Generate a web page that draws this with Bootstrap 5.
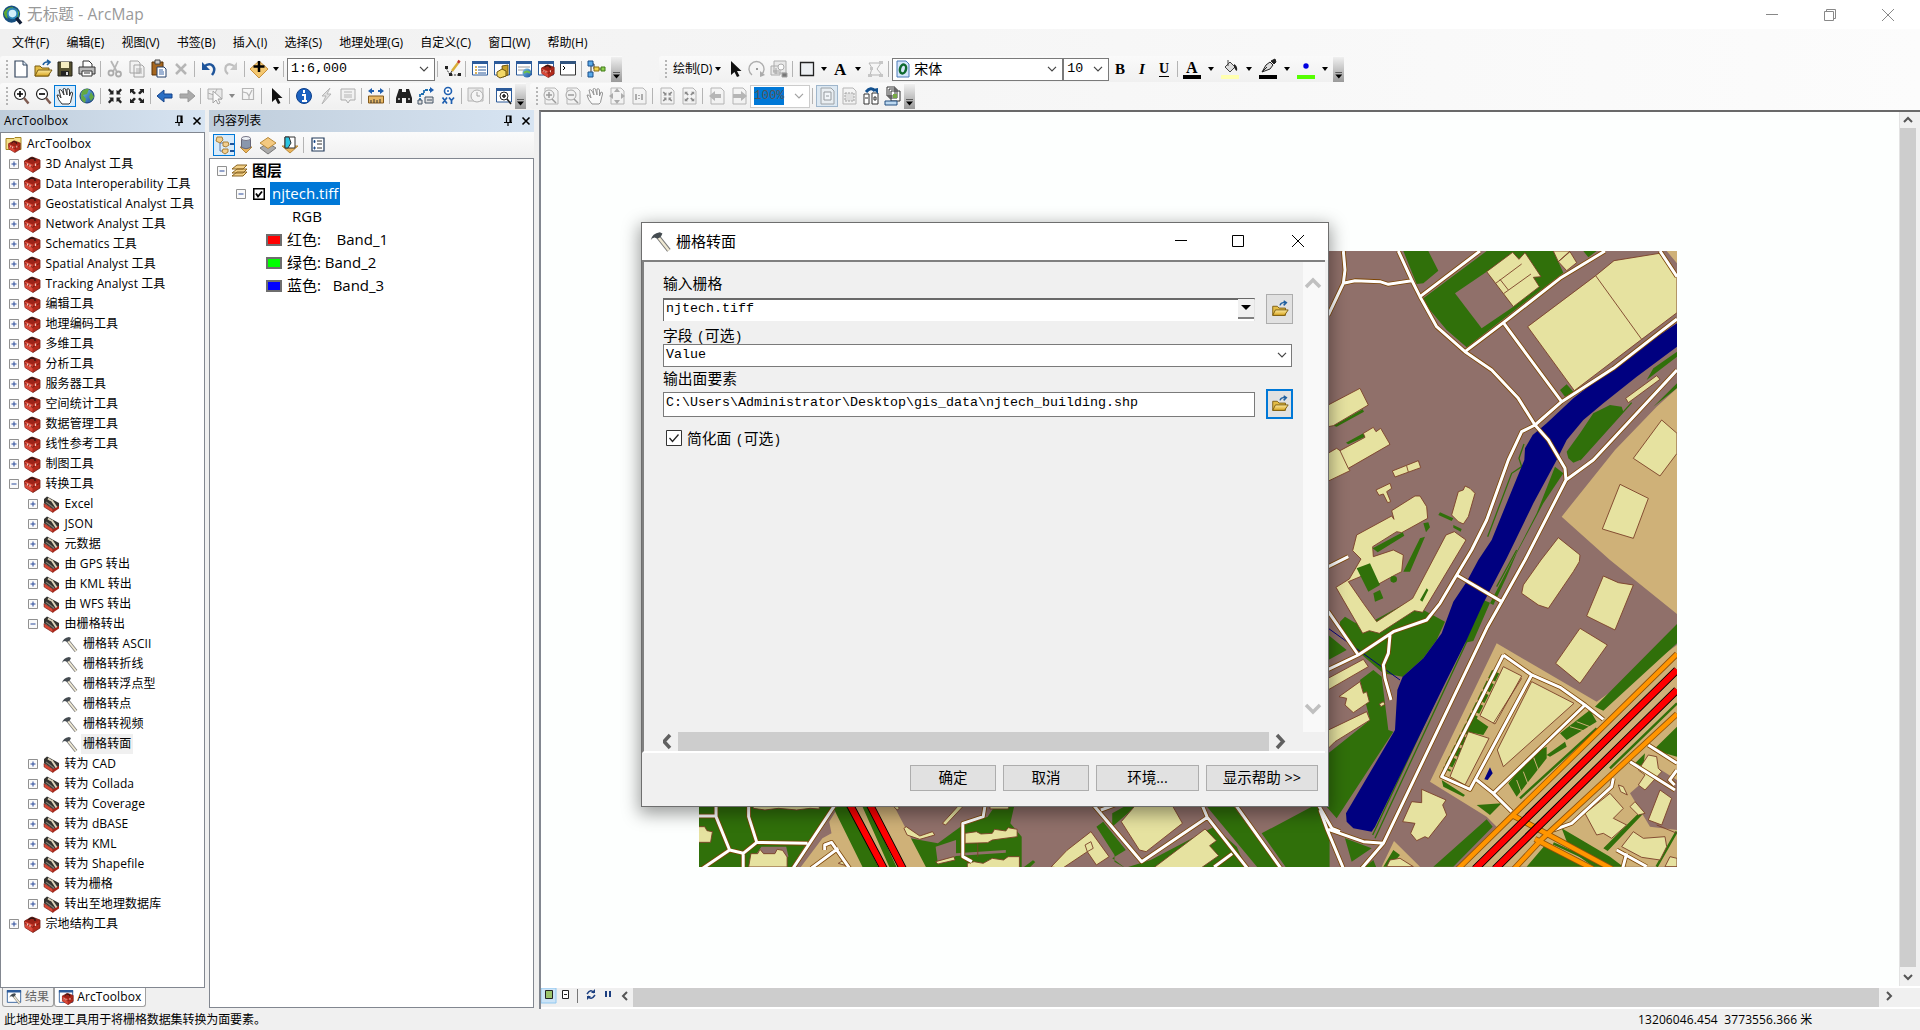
<!DOCTYPE html>
<html lang="zh-CN">
<head>
<meta charset="utf-8">
<title>无标题 - ArcMap</title>
<link href="https://cdn.jsdelivr.net/npm/bootstrap@5.3.0/dist/css/bootstrap.min.css" rel="stylesheet">
<style>
html,body{height:100%;overflow:hidden}
body{font:12px/1 "Open Sans","Noto Sans CJK SC",sans-serif;color:#000;background:#f0f0f0;letter-spacing:-.1px}
svg{display:block;flex:none}
.titlebar{height:29px;color:#999;font-size:15.5px;letter-spacing:.15px;padding-left:2px}
.titlebar .wbtns{gap:38px;padding-right:22px}
.topband{height:81px;background:linear-gradient(90deg,#f0f0f0,#fcfcfc)}
.menus{height:27px;padding-left:12px;gap:17.2px;letter-spacing:0}
.tb{height:26px}
.tb.second{padding-top:2px}
.strip{height:26px;background:linear-gradient(#fafafa,#f0f0f0);padding-left:4px;border-radius:3px 0 0 3px}
.strip.draw{margin-left:37px}
.grip{width:6px;height:18px;background:repeating-linear-gradient(#b5b5b5 0 2px,transparent 2px 4px);background-size:2px 100%;background-repeat:no-repeat;background-position:2px 0;flex:none}
.ti{width:22px;height:22px;flex:none}
.on{outline:1px solid #0078d7;outline-offset:-1px;background:#d8ebfa}
.on2{outline:1px solid #9fb6cc;outline-offset:-1px;background:#dce8f2}
.dis{filter:grayscale(1);opacity:.5}
.sp{width:6px;height:16px;flex:none;background:linear-gradient(#b4b4b4,#b4b4b4) 2px 0/1px 100% no-repeat}
.ct{width:11px;flex:none;display:flex;justify-content:center}
.ct::after{content:"";border:3px solid transparent;border-top:4px solid #000;border-bottom:0}
.strip.draw .ct{width:12px}
.strip.draw .ct.wide{width:16px}
.ct.gr::after{border-top-color:#888}
.cap{width:11px;height:25px;background:linear-gradient(#f0f0f0,#999);flex:none;display:flex;align-items:end;justify-content:center;padding-bottom:3px}
.cap::after{content:"";width:7px;height:7px;background:#000;clip-path:polygon(0 0,100% 0,100% 15%,0 15%,0 42%,100% 42%,50% 100%,0 42%)}
.cbx{height:23px;background:#fff;border:1px solid #7a7a7a;font-size:14px;padding:0 5px 0 3px;flex:none}
.mono{font-family:"Liberation Mono","Noto Sans CJK SC",monospace;letter-spacing:0}
.w-scale{width:148px;font-size:13.3px}.w-font{width:171px}.w-size{width:46px;font-size:13.3px}.w-zoom{width:60px;border-color:#ccc;font-size:13.3px}
.w-zoom span{background:#0078d7;color:#555;padding:3px 0;font-size:12.5px}
.ahead{height:22px;background:linear-gradient(90deg,#bfcddb,#d7e4f2);padding:0 3px 0 4px;letter-spacing:.1px}
.col-tb{width:205px}.col-toc{width:325px}
.box{background:#fff;border:1px solid #828790}
.tree{padding-top:1px;letter-spacing:.1px}
.tree>div{height:20px;display:flex;align-items:center;gap:5px;padding-left:7.5px;white-space:nowrap}
.tree .l0{padding-left:4px}.tree .l2{padding-left:26.5px}.tree .l3{padding-left:60px}
.tree .cur span{background:#f0f0f0;margin-left:-2px;padding:4px 2px}
.tree svg.e{width:10px;height:10px}
.tree svg.i{width:17px;height:17px}
.tabs{height:21px;padding-left:2px}
.tabx{height:19px;border:1px solid #a0a0a0;border-top:0;border-radius:0 0 3px 3px;padding:0 4px 0 3px;gap:3px;display:flex;align-items:center;color:#666;letter-spacing:.1px}
.tabx.act{background:#fff;color:#000}
.toc{font-size:15px;letter-spacing:0}
.toc>div{height:23px;display:flex;align-items:center;white-space:pre}
.toc .t0{padding-left:7px}.toc .t1{padding-left:26px}.toc .t2{padding-left:82px}.toc .t3{padding-left:56px}
.toc .sel{background:#0078d7;color:#fff;padding:4px 2px;margin-left:5px}
.chk{margin-left:7px}
.sw{width:16px;height:12px;border:2px solid #6e6e6e;margin-right:5px}
.sw-r{background:#f00}.sw-g{background:#0f0}.sw-b{background:#00f}
.toctb{height:26px;padding-left:4px;background:linear-gradient(#fbfbfb,#f0f0f0)}
.mapwin{border-top:2px solid #696969;border-left:2px solid #828790;margin-left:5px}
.canvas{background:#fdfffe;position:relative;overflow:hidden}
.plan{position:absolute;left:158px;top:139px}
.plan path{vector-effect:non-scaling-stroke}
.vs{width:21px;background:#f0f0f0;border-left:1px solid #e3e3e3}
.hs{height:21px;background:#f0f0f0;border-top:2px solid #fff}
.thumb{background:#cdcdcd}
.status{height:21px}
.coord{width:282px;letter-spacing:.1px}
.dlg{position:absolute;left:641px;top:222px;width:688px;height:585px;background:#f0f0f0;border:1px solid #6e6e6e;box-shadow:0 5px 16px 2px rgba(0,0,0,.38)}
.dlgt{height:37px;background:#fff;padding:0 22px 0 7px;font-size:15px;letter-spacing:0}
.frame{height:493px;border-top:2px solid #808080;border-left:2px solid #808080;border-bottom:2px solid #fff;margin-right:3px}
.form{width:660px;padding:12px 0 0 19px;font-size:14.8px;letter-spacing:0}
.form .lb{height:18px;line-height:18px;white-space:pre}
.form .lb i{font-style:normal;margin:0 2px}
.form .mono{font-size:13.33px}
.lb2{margin-top:0}.lb3{margin-top:2px}
.lb.lb4{margin-top:8px;padding-left:3px;gap:5px}
.brow{height:34px;width:630px}
.fi{background:#fff;border:1px solid #7a7a7a;display:flex;align-items:center;padding:0 4px 2px 2px;flex:none}
.fi.one{width:592px;height:23px;border-width:2px 1px 0 1px;border-color:#696969 #e3e3e3 #fff #696969;padding-right:0}
.fi.two{width:629px;height:23px}.fi.three{width:592px;height:25px}
.dd{width:16px;height:20px;background:#f0f0f0;border-bottom:2px solid #808080;align-self:end}
.bb{width:27px;height:30px;background:#e1e1e1;border:1px solid #adadad;display:flex;align-items:center;justify-content:center}
.bb.foc{border:2px solid #0078d7}
.hscr{margin-top:285px}
.dbtns{gap:7px;padding:12px 10px 0 0}
.dbtn{height:26px;background:#e1e1e1;border:1px solid #adadad;border-radius:0;padding:0;font-size:14.5px;line-height:1;color:#000;letter-spacing:0}
.b1{width:86px}.b2{width:103px}.b3{width:112px}
</style>
<script src="https://cdn.jsdelivr.net/npm/bootstrap@5.3.0/dist/js/bootstrap.bundle.min.js"></script>
</head>
<body class="d-flex flex-column">
<svg width="0" height="0" class="position-absolute">
<defs>
<linearGradient id="gl" x1="0" y1="0" x2="1" y2="1"><stop offset="0" stop-color="#7cc4e8"/><stop offset="1" stop-color="#1a4fa0"/></linearGradient>
<linearGradient id="gy" x1="0" y1="0" x2="0" y2="1"><stop offset="0" stop-color="#fdeaa0"/><stop offset="1" stop-color="#d8a520"/></linearGradient>
<symbol id="app" viewBox="0 0 22 22"><circle cx="10" cy="10" r="9" fill="#174f80"/><path d="M2 8Q6 2 12 3L9 8 5 9 6 15Q2 13 2 8ZM14 4l4 4-1 6-3-4z" fill="#5da832"/><circle cx="11" cy="9.500" r="5" fill="#d3effa" stroke="#2c86b8" stroke-width="2"/><path d="M15 14l5 6" stroke="#111f38" stroke-width="3.500"/></symbol>
<symbol id="new" viewBox="0 0 22 22"><path d="M5 3h8l4 4v12H5z" fill="#fff" stroke="#35475e" stroke-width="1.200"/><path d="M13 3v4h4" fill="#dce8f5" stroke="#35475e"/></symbol>
<symbol id="open" viewBox="0 0 22 22"><path d="M3 18V8h5l2 2h7v8z" fill="#e3bc46" stroke="#7a5c10"/><path d="M3 18l3-6h14l-4 6z" fill="url(#gy)" stroke="#7a5c10"/><path d="M11 7q1-3 4-3h2M15 2l3 2-3 3" fill="none" stroke="#1e5fa0" stroke-width="1.600"/></symbol>
<symbol id="save" viewBox="0 0 22 22"><path d="M4 4h14v14H4z" fill="#55502f" stroke="#25231a"/><path d="M7 4h8v6H7z" fill="#f4ecc0"/><path d="M7 13h8v5H7z" fill="#222"/><path d="M12 14h2v3h-2z" fill="#ddd"/></symbol>
<symbol id="print" viewBox="0 0 22 22"><path d="M7 9V3h6l3 3v3" fill="#fff" stroke="#333"/><path d="M3 9h16v7H3z" fill="#bbb" stroke="#333"/><path d="M6 13h10v5H6z" fill="#fff" stroke="#333"/><path d="M8 15h6" stroke="#333"/></symbol>
<symbol id="cut" viewBox="0 0 22 22"><path d="M7 3l6 11M14 3L9 14" stroke="#777" stroke-width="1.800"/><g fill="none" stroke="#666" stroke-width="1.800"><circle cx="7" cy="15" r="2.500"/><circle cx="14.500" cy="16" r="2.500"/></g></symbol>
<symbol id="copy" viewBox="0 0 22 22"><path d="M4 3h8l2 2v10H4zM8 7h8l2 2v10H8z" fill="#eee" stroke="#555"/><path d="M10 11h6M10 13h6M10 15h6" stroke="#666"/></symbol>
<symbol id="paste" viewBox="0 0 22 22"><path d="M4 4h11v13H4z" fill="#a5661f" stroke="#5a3208"/><path d="M7 2h5v4H7z" fill="#ccc" stroke="#444"/><path d="M9 9h7l2 2v8H9z" fill="#fff" stroke="#25406a"/><path d="M11 12h4M11 14h5M11 16h5" stroke="#3a66a8"/></symbol>
<symbol id="del" viewBox="0 0 22 22"><path d="M6 6l10 10M16 6L6 16" stroke="#777" stroke-width="2.500"/></symbol>
<symbol id="undo" viewBox="0 0 22 22"><path d="M6 9q5-5 9-1 3 4-1 9" fill="none" stroke="#1f559b" stroke-width="2.500"/><path d="M4 4v8h8z" fill="#1f559b"/></symbol>
<symbol id="redo" viewBox="0 0 22 22"><path d="M15 9q-5-5-9-1-2 5 2 8" fill="none" stroke="#888" stroke-width="2.200"/><path d="M17 4v8h-7z" fill="#999"/></symbol>
<symbol id="add" viewBox="0 0 22 22"><path d="M11 3l9 8-9 9-9-9z" fill="#f4c76f" stroke="#c8913e"/><path d="M11 3v11M5.500 8.500h11" stroke="#000" stroke-width="2.500"/></symbol>
<symbol id="edit" viewBox="0 0 22 22"><path d="M5 10l4 7h10" fill="none" stroke="#333" stroke-dasharray="2 1"/><path d="M4 8h3v3H4zM8 15h3v3H8zM17 15h3v3h-3z" fill="#222"/><path d="M17 5l-6 8" stroke="#d8ad36" stroke-width="2.500"/><path d="M18.500 2.500l-1.500 2.500" stroke="#c0392b" stroke-width="2.500"/><path d="M11 13l-2 3" stroke="#333"/></symbol>
<symbol id="win" viewBox="0 0 22 22"><path d="M3.500 4h15v13h-15z" fill="#fff" stroke="#2c5b9a"/><path d="M3 3h16v3H3z" fill="#2c5b9a"/></symbol>
<symbol id="wlist" viewBox="0 0 22 22"><use href="#win"/><path d="M6 9h2M6 12h2M6 15h2" stroke="#d09a20" stroke-width="1.500"/><path d="M9 9h8M9 12h8M9 15h8" stroke="#2c5b9a"/></symbol>
<symbol id="wcat" viewBox="0 0 22 22"><use href="#win"/><path d="M11 8l6-1v10l-5 2z" fill="#c9a227" stroke="#6f5610"/><path d="M6 14l5-3 4 2v5l-6 2-3-2z" fill="#f3d867" stroke="#6f5610"/></symbol>
<symbol id="wsea" viewBox="0 0 22 22"><use href="#win"/><path d="M5 9h12M5 12h7" stroke="#999"/><circle cx="14" cy="15" r="4.500" fill="url(#gl)"/><path d="M11 15q3-3 6 0" stroke="#6fc048" stroke-width="2" fill="none"/></symbol>
<symbol id="wtbx" viewBox="0 0 22 22"><use href="#win"/><svg x="6" y="6" width="14" height="14"><use href="#tbx"/></svg></symbol>
<symbol id="wpy" viewBox="0 0 22 22"><path d="M3.500 4h15v13h-15z" fill="#fff" stroke="#333"/><path d="M3 3h16v3H3z" fill="#33557f"/><path d="M6 8l2 2-2 2" fill="none" stroke="#000"/></symbol>
<symbol id="model" viewBox="0 0 22 22"><path d="M6 6v10M7 6h2v5h7" fill="none" stroke="#333"/><path d="M3 3h5v5H3zM3 14h5v5H3z" fill="#59a9e8" stroke="#1a4f8a"/><path d="M9 9h5v4H9z" fill="#f1d44f" stroke="#8a6d10"/><path d="M16 9h4v4h-4z" fill="#8ed052" stroke="#3e7a15"/></symbol>
<symbol id="zin" viewBox="0 0 22 22"><circle cx="10" cy="9" r="5.500" fill="#fff" stroke="#222" stroke-width="1.200"/><path d="M14 13l4.500 5.500" stroke="#7d5a50" stroke-width="2.500"/><path d="M10 6v6M7 9h6" stroke="#000" stroke-width="1.600"/></symbol>
<symbol id="zout" viewBox="0 0 22 22"><circle cx="10" cy="9" r="5.500" fill="#fff" stroke="#222" stroke-width="1.200"/><path d="M14 13l4.500 5.500" stroke="#7d5a50" stroke-width="2.500"/><path d="M7 9h6" stroke="#000" stroke-width="1.600"/></symbol>
<symbol id="pan" viewBox="0 0 22 22"><path d="M8 19q-4-4-5-9 2-1 4 3L5 5q2-1 3 1l2 4-1-6q2-1 2.500 0l1.500 6V4q2-1 2.500 1v6l1.500-4q2 0 1.500 2l-1.500 6q0 3-2 4z" fill="#fff" stroke="#333"/></symbol>
<symbol id="globe" viewBox="0 0 22 22"><circle cx="11" cy="11" r="7" fill="url(#gl)" stroke="#143a78"/><path d="M6 6q4-3 7-2l-2 5-4 1 3 4-1 4Q3 15 6 6zM15 7l3 5-3 4-2-4z" fill="#63a842"/></symbol>
<symbol id="fin" viewBox="0 0 22 22"><g fill="#222"><path d="M4 5l1.500-1.500L8 6l1.500-1v4.500H5L6.500 8zM18 5l-1.500-1.500L14 6l-1.500-1v4.500H17L15.500 8zM4 17l1.500 1.500L8 16l1.500 1v-4.500H5L6.500 14zM18 17l-1.500 1.500L14 16l-1.500 1v-4.500H17L15.500 14z"/></g></symbol>
<symbol id="fout" viewBox="0 0 22 22"><g fill="#222"><path d="M4 4h4.500L7.500 5.500 10 8 8 9.500 5.500 7 4 8.500zM18 4h-4.500l1 1.500L12 8l2 1.500L16.500 7 18 8.500zM4 18h4.500l-1-1.500L10 14l-2-1.500L5.500 15 4 13.500zM18 18h-4.500l1-1.500L12 14l2-1.500 2.500 2.500 1.500-1.500z"/></g></symbol>
<symbol id="back" viewBox="0 0 22 22"><path d="M3 11l7-6v4h8v4h-8v4z" fill="#2b6fc4" stroke="#15438a"/></symbol>
<symbol id="fwd" viewBox="0 0 22 22"><path d="M19 11l-7-6v4H4v4h8v4z" fill="#aaa" stroke="#999"/></symbol>
<symbol id="self" viewBox="0 0 22 22"><path d="M4 4h14v10H4zM4 8l6 2 3-6M10 10l2 4" fill="#ddd" stroke="#666"/><path d="M9 6v12l3-3 2 4 2-1-2-4h4z" fill="#fff" stroke="#555"/></symbol>
<symbol id="clr" viewBox="0 0 22 22"><path d="M5.500 3.500h11v11h-11zM6 7l4 1 2 3 3-6M12 11v3" fill="none" stroke="#777" stroke-width="1.200"/></symbol>
<symbol id="ptr" viewBox="0 0 22 22"><path d="M7 3v14l3.500-3 2.500 5 2.500-1-2.500-5h4.500z" fill="#111"/></symbol>
<symbol id="info" viewBox="0 0 22 22"><circle cx="11" cy="11" r="7.500" fill="#1c62c0" stroke="#0d3f8a"/><path d="M11 5v3M9 10h3v6M9 16h5" stroke="#fff" stroke-width="2" fill="none"/></symbol>
<symbol id="bolt" viewBox="0 0 22 22"><path d="M15 3l-8 8h4l-4 8 9-10h-4z" fill="#ccc" stroke="#777"/></symbol>
<symbol id="pop" viewBox="0 0 22 22"><path d="M4 4h14v11h-5l-2 3-2-3H4z" fill="#eee" stroke="#666"/><path d="M7 7h8M7 10h8M7 12h8" stroke="#777"/></symbol>
<symbol id="meas" viewBox="0 0 22 22"><path d="M3.500 11h15v7h-15z" fill="#e7b866" stroke="#84591a"/><path d="M6 15v3M9 14v4M12 15v3M15 14v4" stroke="#333"/><path d="M3 6l4-3v2h2v2H7v2zM19 6l-4-3v2h-2v2h2v2z" fill="#1f5fb0"/></symbol>
<symbol id="bino" viewBox="0 0 22 22"><path d="M6 4h3v3h4V4h3l3 9v5h-6v-5H9v5H3v-5z" fill="#222"/><path d="M5 14h2M15 14h2" stroke="#aaa" stroke-width="2"/></symbol>
<symbol id="route" viewBox="0 0 22 22"><path d="M5 16V9h4V5h7" fill="none" stroke="#1f6fb0" stroke-width="1.800" stroke-dasharray="3 1"/><path d="M15 2l4 3-4 3z" fill="#1f5fb0"/><path d="M10 12h8v6h-8zM3 15h4v4H3z" fill="#ddd" stroke="#456"/><path d="M12 15h5" stroke="#456"/></symbol>
<symbol id="xy" viewBox="0 0 22 22"><circle cx="11" cy="6" r="3.500" fill="#fff" stroke="#1f5fb0" stroke-width="1.600"/><circle cx="11" cy="6" r="1" fill="#1f5fb0"/><path d="M5.500 12.500l4.500 6M10 12.500l-4.500 6M12 12.500l2.500 3 2.500-3M14.500 15v4" stroke="#1f5fb0" stroke-width="1.700" fill="none"/></symbol>
<symbol id="time" viewBox="0 0 22 22"><path d="M3 3h15v13H3z" fill="#ddd" stroke="#777"/><circle cx="12" cy="11" r="6" fill="#f5f5f5" stroke="#666"/><path d="M12 7v4h3" fill="none" stroke="#555"/></symbol>
<symbol id="view" viewBox="0 0 22 22"><use href="#win"/><circle cx="11" cy="11" r="4" fill="#fff" stroke="#222"/><path d="M11 9v4M9 11h4M14 14l4 5" stroke="#222" stroke-width="1.600"/></symbol>
<symbol id="pg" viewBox="0 0 22 22"><path d="M5 3h10l3 3v13H5z" fill="#f2f2f2" stroke="#777"/></symbol>
<symbol id="pin1" viewBox="0 0 22 22"><use href="#pg"/><circle cx="9" cy="10" r="5" fill="#eee" stroke="#555"/><path d="M9 7v6M6 10h6M12 14l4 4" stroke="#444" stroke-width="1.500"/></symbol>
<symbol id="pout" viewBox="0 0 22 22"><use href="#pg"/><circle cx="9" cy="10" r="5" fill="#eee" stroke="#555"/><path d="M6 10h6M12 14l4 4" stroke="#444" stroke-width="1.500"/></symbol>
<symbol id="pfull" viewBox="0 0 22 22"><use href="#pg"/><path d="M11 3l3 4H8zM11 19l3-4H8zM3 11l4-3v6zM19 11l-4-3v6z" fill="#666"/></symbol>
<symbol id="p11" viewBox="0 0 22 22"><use href="#pg"/><path d="M8 9v6M14 9v6M11 10v1M11 13v1" stroke="#444" stroke-width="1.600"/></symbol>
<symbol id="pfi" viewBox="0 0 22 22"><use href="#pg"/><svg x="4" y="4" width="15" height="15"><use href="#fin"/></svg></symbol>
<symbol id="pfo" viewBox="0 0 22 22"><use href="#pg"/><svg x="4" y="4" width="15" height="15"><use href="#fout"/></svg></symbol>
<symbol id="pb" viewBox="0 0 22 22"><use href="#pg"/><path d="M3 11l6-5v3h6v4H9v3z" fill="#777"/></symbol>
<symbol id="pf" viewBox="0 0 22 22"><use href="#pg"/><path d="M19 11l-6-5v3H5v4h8v3z" fill="#777"/></symbol>
<symbol id="pd" viewBox="0 0 22 22"><use href="#pg"/><path d="M8 7h7v8H8zM10 11h3" fill="#fff" stroke="#666"/></symbol>
<symbol id="ph" viewBox="0 0 22 22"><use href="#pg"/><path d="M7 8h9v8H7z" fill="#ccc" stroke="#555" stroke-dasharray="2 1"/></symbol>
<symbol id="chg" viewBox="0 0 22 22"><path d="M4 9h5v10H4zM12 8h6v11h-6z" fill="#fff" stroke="#333"/><path d="M6 7q5-6 9-1" fill="none" stroke="#13518f" stroke-width="3"/><path d="M13 4l5-1v6z" fill="#13518f"/><path d="M5 13h3M14 12h2v3h-2z" stroke="#333" fill="none"/></symbol>
<symbol id="ddp" viewBox="0 0 22 22"><path d="M5 2h8v9H5zM7 4h8v9H7zM9 6h9v10H9z" fill="#fff" stroke="#333"/><path d="M11 9h4v4h-4z" fill="#7a4"/><path d="M3 16h12v4H3z" fill="#bcd8f0" stroke="#234f80"/></symbol>
<symbol id="rot" viewBox="0 0 22 22"><path d="M6 17A7.500 7.500 0 1 1 15 17" fill="none" stroke="#666" stroke-width="1.400"/><path d="M14 13v6l5-2z" fill="#666"/><path d="M10 10h2v2h-2z" fill="#444"/></symbol>
<symbol id="grp" viewBox="0 0 22 22"><path d="M6 3h12v12H6zM3 8h9v9H3z" fill="#ddd" stroke="#666"/><circle cx="13" cy="9" r="3" fill="#fff" stroke="#666"/><path d="M5 13h6M8 10v6M14 15h5v4h-5z" stroke="#555"/></symbol>
<symbol id="rect" viewBox="0 0 22 22"><path d="M4.500 4.500h13v13h-13z" fill="#eceff2" stroke="#222" stroke-width="1.300"/></symbol>
<symbol id="vtx" viewBox="0 0 22 22"><path d="M6 17L8 10l-3-5h12l-4 6 5 6z" fill="none" stroke="#777"/><path d="M4 16h4v3H4zM15 16h4v3h-4zM15 3h4v3h-4zM6 9h3v3H6z" fill="#999"/></symbol>
<symbol id="fill" viewBox="0 0 22 22"><path d="M6 9l5-5 5 5-5 5z" fill="#ddd" stroke="#444"/><path d="M9 8V2" stroke="#444"/><path d="M15 6q4 2 3 7-2-1-3-4z" fill="#222"/><path d="M2 17h18v4H2z" fill="#ffffb0"/></symbol>
<symbol id="pen" viewBox="0 0 22 22"><path d="M5 14L9 7l4-3 3 3-3 4z" fill="#ddd" stroke="#222"/><path d="M5 14l5-5M14 3l4-2 1 3-2 2z" stroke="#222" fill="#222"/><path d="M2 17h18v4H2z"/></symbol>
<symbol id="dot" viewBox="0 0 22 22"><circle cx="11" cy="8" r="2.700" fill="#0000e0"/><path d="M2 17h18v4H2z" fill="#5f0"/></symbol>
<symbol id="tbx" viewBox="0 0 17 17"><path d="M0.500 5L8 1l8 3v8l-7 4.500-8-5z" fill="#b42a1c" stroke="#701810" stroke-width=".8"/><path d="M.8 5.200L8.500 8.500V16L1.200 11.500z" fill="#d9493a"/><path d="M.8 5L8 1.500l7.500 2.800-7 4z" fill="#9c2318"/><path d="M1 7.500l7.500 3.800 7-4" fill="none" stroke="#701810" stroke-width=".8"/><path d="M4.500 4q2-3.500 6.500-1v2" fill="none" stroke="#2a1512" stroke-width="1.300"/><path d="M3.500 7.500v2M6 8.700v2M11.500 7.500v2.500" stroke="#f3c9bd" stroke-width="1.300"/></symbol>
<symbol id="tst" viewBox="0 0 17 17"><path d="M1 7.500l9 5.500v3.500L1.200 11z" fill="#d84a38" stroke="#7c1a10" stroke-width=".7"/><path d="M10 13l6-3.500v3L10 16.500z" fill="#a82418"/><path d="M1 7V3l3-2.500L16 7v3l-6 3z" fill="#35332f"/><path d="M3 6l8 6" stroke="#807a70" stroke-width="1.300"/><path d="M8.500 4l5 7.500M5 2.500l3 2" stroke="#ddd4bd" stroke-width="2"/></symbol>
<symbol id="ham" viewBox="0 0 17 17"><path d="M7 5l8 10" stroke="#777" stroke-width="3.400"/><path d="M7 5l8 10" stroke="#efe8d2" stroke-width="1.900"/><path d="M1 7q1-5 7-6l2 1-1 2-1 1-2 1-2-1q-2 0-3 2z" fill="#444b50"/></symbol>
<symbol id="fold" viewBox="0 0 17 17"><path d="M1 2.500h8l1-1h6v12H1z" fill="#f5e08b" stroke="#a58420"/><svg x="3" y="4" width="13" height="13"><use href="#tbx"/></svg></symbol>
<symbol id="pl" viewBox="0 0 10 10"><path d="M.5.500h9v9h-9z" fill="#fafafa" stroke="#919191"/><path d="M5 2.500v5M2.500 5h5" stroke="#2a4a9a"/></symbol>
<symbol id="mi" viewBox="0 0 10 10"><path d="M.5.500h9v9h-9z" fill="#fafafa" stroke="#919191"/><path d="M2.500 5h5" stroke="#2a4a9a"/></symbol>
<symbol id="pinx" viewBox="0 0 10 12"><path d="M3 1h5v6M3.500 1v6M1 7.500h8M5 7v4M7 1v6" fill="none" stroke="#000" stroke-width="1.200"/></symbol>
<symbol id="xx" viewBox="0 0 10 12"><path d="M1.500 2.500l7 7M8.500 2.500l-7 7" stroke="#000" stroke-width="1.600"/></symbol>
<symbol id="chev" viewBox="0 0 10 6"><path d="M1 .8l4 4 4-4" fill="none" stroke="#444" stroke-width="1.200"/></symbol>
<symbol id="dia" viewBox="0 0 22 22"><path d="M3 14l8-5 8 5-8 6z" fill="#aaa" stroke="#777"/><path d="M3 9l8-5.500L19 9l-8 5.500z" fill="#f4c980" stroke="#b98a3a"/></symbol>
<symbol id="cyl" viewBox="0 0 22 22"><path d="M5 13h12l-6 6z" fill="#eab35a" stroke="#b98a3a"/><path d="M6.500 4.500v9q4.500 2.500 9 0v-9" fill="#8a97ac" stroke="#667"/><ellipse cx="11" cy="4.500" rx="4.500" ry="2" fill="#eef2f7" stroke="#778"/></symbol>
<symbol id="lsel" viewBox="0 0 22 22"><path d="M3 12h16l-8 7z" fill="#eab35a" stroke="#b98a3a"/><path d="M6 3h10v11H6z" fill="#fff" stroke="#333"/><path d="M6 3h4l2 6-3 5H6z" fill="#2bc4e0" stroke="#333"/></symbol>
<symbol id="lord" viewBox="0 0 22 22"><path d="M7 9v8h4M7 9h4" fill="none" stroke="#5a7ab0"/><path d="M4 3h5l1 3-3 3-4-2zM10 8h5l1 3-3 2-3-1zM10 15h5v3l-3 2-3-2z" fill="#f2cf90" stroke="#a9803a"/><path d="M17 10h4M17 17h4" stroke="#1f559b" stroke-width="2"/></symbol>
<symbol id="opt" viewBox="0 0 22 22"><path d="M5 4h12v13H5z" fill="#fff" stroke="#223a5a" stroke-width="1.200"/><path d="M10 7h5M10 10h5M10 14h5" stroke="#333"/><path d="M7 6.500h1v2H7zM7 13h1v2H7z" stroke="#2a5a9a"/></symbol>
<symbol id="lay" viewBox="0 0 17 15"><path d="M1 13l5-4h10l-4 4zM1 10l5-4h10l-4 4zM1 6l5-4h10l-4 4z" fill="#f2d088" stroke="#8a6420"/></symbol>
</defs>
</svg>

<header class="titlebar bg-white d-flex align-items-center justify-content-between">
  <div class="d-flex align-items-center gap-1"><svg width="21" height="22"><use href="#app"/></svg><span>无标题 - ArcMap</span></div>
  <div class="wbtns d-flex align-items-center">
    <svg width="20" height="14"><path d="M4 6.500h12" stroke="#888"/></svg>
    <svg width="20" height="14"><path d="M4.500 3.500h9v9h-9zM6.500 3V1.500h9v9H14" fill="none" stroke="#888"/></svg>
    <svg width="20" height="14"><path d="M4 1l12 12M16 1L4 13" stroke="#888"/></svg>
  </div>
</header>

<div class="topband">
  <nav class="menus d-flex align-items-center">
    <span>文件(F)</span><span>编辑(E)</span><span>视图(V)</span><span>书签(B)</span><span>插入(I)</span><span>选择(S)</span><span>地理处理(G)</span><span>自定义(C)</span><span>窗口(W)</span><span>帮助(H)</span>
  </nav>
  <div class="tb d-flex align-items-center">
    <div class="strip d-flex align-items-center">
      <i class="grip"></i>
      <svg class="ti"><use href="#new"/></svg><svg class="ti"><use href="#open"/></svg><svg class="ti"><use href="#save"/></svg><svg class="ti"><use href="#print"/></svg><i class="sp"></i>
      <svg class="ti dis"><use href="#cut"/></svg><svg class="ti dis"><use href="#copy"/></svg><svg class="ti"><use href="#paste"/></svg><svg class="ti dis"><use href="#del"/></svg><i class="sp"></i>
      <svg class="ti"><use href="#undo"/></svg><svg class="ti dis"><use href="#redo"/></svg><i class="sp"></i>
      <svg class="ti"><use href="#add"/></svg><i class="ct"></i><i class="sp"></i>
      <div class="cbx w-scale mono d-flex align-items-center justify-content-between"><span>1:6,000</span><svg width="10" height="6"><use href="#chev"/></svg></div><i class="sp"></i>
      <svg class="ti"><use href="#edit"/></svg><i class="sp"></i>
      <svg class="ti"><use href="#wlist"/></svg><svg class="ti"><use href="#wcat"/></svg><svg class="ti"><use href="#wsea"/></svg><svg class="ti"><use href="#wtbx"/></svg><svg class="ti"><use href="#wpy"/></svg><i class="sp"></i>
      <svg class="ti"><use href="#model"/></svg><i class="cap ms-1"></i>
    </div>
    <div class="strip draw d-flex align-items-center">
      <i class="grip"></i><span class="ps-1">绘制(D)</span><i class="ct"></i>
      <svg class="ti"><use href="#ptr"/></svg><svg class="ti dis"><use href="#rot"/></svg><svg class="ti dis"><use href="#grp"/></svg><i class="sp"></i>
      <svg class="ti"><use href="#rect"/></svg><i class="ct"></i>
      <svg class="ti"><text x="4" y="17" font-family="Liberation Serif" font-weight="700" font-size="17">A</text></svg><i class="ct"></i>
      <svg class="ti dis"><use href="#vtx"/></svg><i class="sp"></i>
      <div class="cbx w-font d-flex align-items-center"><svg width="14" height="18" viewBox="0 0 14 18"><path d="M1 1h9l3 3v13H1z" fill="#d5e6fa" stroke="#4a7ab8"/><ellipse cx="7" cy="9" rx="3" ry="4.500" fill="none" stroke="#0f6a2e" stroke-width="2.500" transform="rotate(15 7 9)"/></svg><span class="ps-1 me-auto">宋体</span><svg width="10" height="6"><use href="#chev"/></svg></div>
      <div class="cbx w-size mono d-flex align-items-center justify-content-between"><span>10</span><svg width="10" height="6"><use href="#chev"/></svg></div>
      <svg class="ti" font-family="Liberation Serif" font-weight="700" font-size="15"><text x="6" y="16">B</text></svg><svg class="ti" font-family="Liberation Serif" font-weight="700" font-style="italic" font-size="15"><text x="8" y="16">I</text></svg><svg class="ti" font-family="Liberation Serif" font-weight="700" font-size="14"><text x="6" y="15">U</text><path d="M6 18.500h10" stroke="#000"/></svg><i class="sp"></i>
      <svg class="ti"><text x="5" y="15" font-family="Liberation Serif" font-weight="700" font-size="16">A</text><path d="M2 17h18v4H2z"/></svg><i class="ct wide"></i>
      <svg class="ti"><use href="#fill"/></svg><i class="ct wide"></i><svg class="ti"><use href="#pen"/></svg><i class="ct wide"></i><svg class="ti"><use href="#dot"/></svg><i class="ct wide"></i><i class="cap"></i>
    </div>
  </div>
  <div class="tb second d-flex align-items-center">
    <div class="strip d-flex align-items-center">
      <i class="grip"></i>
      <svg class="ti"><use href="#zin"/></svg><svg class="ti"><use href="#zout"/></svg><svg class="ti on"><use href="#pan"/></svg><svg class="ti"><use href="#globe"/></svg><i class="sp"></i>
      <svg class="ti"><use href="#fin"/></svg><svg class="ti"><use href="#fout"/></svg><i class="sp"></i>
      <svg class="ti"><use href="#back"/></svg><svg class="ti"><use href="#fwd"/></svg><i class="sp"></i>
      <svg class="ti dis"><use href="#self"/></svg><i class="ct gr"></i><svg class="ti dis"><use href="#clr"/></svg><i class="sp"></i>
      <svg class="ti"><use href="#ptr"/></svg><i class="sp"></i>
      <svg class="ti"><use href="#info"/></svg><svg class="ti dis"><use href="#bolt"/></svg><svg class="ti dis"><use href="#pop"/></svg><i class="sp"></i>
      <svg class="ti"><use href="#meas"/></svg><i class="sp"></i>
      <svg class="ti"><use href="#bino"/></svg><svg class="ti"><use href="#route"/></svg><svg class="ti"><use href="#xy"/></svg><i class="sp"></i>
      <svg class="ti dis"><use href="#time"/></svg><i class="sp"></i>
      <svg class="ti"><use href="#view"/></svg><i class="cap"></i>
    </div>
    <div class="strip d-flex align-items-center ms-1">
      <i class="grip"></i>
      <svg class="ti dis"><use href="#pin1"/></svg><svg class="ti dis"><use href="#pout"/></svg><svg class="ti dis"><use href="#pan"/></svg><svg class="ti dis"><use href="#pfull"/></svg><svg class="ti dis"><use href="#p11"/></svg><i class="sp"></i>
      <svg class="ti dis"><use href="#pfi"/></svg><svg class="ti dis"><use href="#pfo"/></svg><i class="sp"></i>
      <svg class="ti dis"><use href="#pb"/></svg><svg class="ti dis"><use href="#pf"/></svg>
      <div class="cbx w-zoom mono d-flex align-items-center justify-content-between"><span>100%</span><svg width="10" height="6" opacity=".5"><use href="#chev"/></svg></div><i class="sp"></i>
      <svg class="ti on2"><use href="#pd" opacity=".6"/></svg><svg class="ti dis"><use href="#ph"/></svg><svg class="ti"><use href="#chg"/></svg><svg class="ti"><use href="#ddp"/></svg><i class="cap"></i>
    </div>
  </div>
</div>

<main class="d-flex flex-fill" style="min-height:0">
  <aside class="col-tb d-flex flex-column">
    <div class="ahead d-flex align-items-center"><span class="me-auto">ArcToolbox</span><svg width="10" height="12" class="me-2"><use href="#pinx"/></svg><svg width="10" height="12"><use href="#xx"/></svg></div>
    <div class="box flex-fill tree">
      <div class="l0"><svg class="i"><use href="#fold"/></svg><span>ArcToolbox</span></div>
      <div><svg class="e"><use href="#pl"/></svg><svg class="i"><use href="#tbx"/></svg><span>3D Analyst 工具</span></div>
      <div><svg class="e"><use href="#pl"/></svg><svg class="i"><use href="#tbx"/></svg><span>Data Interoperability 工具</span></div>
      <div><svg class="e"><use href="#pl"/></svg><svg class="i"><use href="#tbx"/></svg><span>Geostatistical Analyst 工具</span></div>
      <div><svg class="e"><use href="#pl"/></svg><svg class="i"><use href="#tbx"/></svg><span>Network Analyst 工具</span></div>
      <div><svg class="e"><use href="#pl"/></svg><svg class="i"><use href="#tbx"/></svg><span>Schematics 工具</span></div>
      <div><svg class="e"><use href="#pl"/></svg><svg class="i"><use href="#tbx"/></svg><span>Spatial Analyst 工具</span></div>
      <div><svg class="e"><use href="#pl"/></svg><svg class="i"><use href="#tbx"/></svg><span>Tracking Analyst 工具</span></div>
      <div><svg class="e"><use href="#pl"/></svg><svg class="i"><use href="#tbx"/></svg><span>编辑工具</span></div>
      <div><svg class="e"><use href="#pl"/></svg><svg class="i"><use href="#tbx"/></svg><span>地理编码工具</span></div>
      <div><svg class="e"><use href="#pl"/></svg><svg class="i"><use href="#tbx"/></svg><span>多维工具</span></div>
      <div><svg class="e"><use href="#pl"/></svg><svg class="i"><use href="#tbx"/></svg><span>分析工具</span></div>
      <div><svg class="e"><use href="#pl"/></svg><svg class="i"><use href="#tbx"/></svg><span>服务器工具</span></div>
      <div><svg class="e"><use href="#pl"/></svg><svg class="i"><use href="#tbx"/></svg><span>空间统计工具</span></div>
      <div><svg class="e"><use href="#pl"/></svg><svg class="i"><use href="#tbx"/></svg><span>数据管理工具</span></div>
      <div><svg class="e"><use href="#pl"/></svg><svg class="i"><use href="#tbx"/></svg><span>线性参考工具</span></div>
      <div><svg class="e"><use href="#pl"/></svg><svg class="i"><use href="#tbx"/></svg><span>制图工具</span></div>
      <div><svg class="e"><use href="#mi"/></svg><svg class="i"><use href="#tbx"/></svg><span>转换工具</span></div>
      <div class="l2"><svg class="e"><use href="#pl"/></svg><svg class="i"><use href="#tst"/></svg><span>Excel</span></div>
      <div class="l2"><svg class="e"><use href="#pl"/></svg><svg class="i"><use href="#tst"/></svg><span>JSON</span></div>
      <div class="l2"><svg class="e"><use href="#pl"/></svg><svg class="i"><use href="#tst"/></svg><span>元数据</span></div>
      <div class="l2"><svg class="e"><use href="#pl"/></svg><svg class="i"><use href="#tst"/></svg><span>由 GPS 转出</span></div>
      <div class="l2"><svg class="e"><use href="#pl"/></svg><svg class="i"><use href="#tst"/></svg><span>由 KML 转出</span></div>
      <div class="l2"><svg class="e"><use href="#pl"/></svg><svg class="i"><use href="#tst"/></svg><span>由 WFS 转出</span></div>
      <div class="l2"><svg class="e"><use href="#mi"/></svg><svg class="i"><use href="#tst"/></svg><span>由栅格转出</span></div>
      <div class="l3"><svg class="i"><use href="#ham"/></svg><span>栅格转 ASCII</span></div>
      <div class="l3"><svg class="i"><use href="#ham"/></svg><span>栅格转折线</span></div>
      <div class="l3"><svg class="i"><use href="#ham"/></svg><span>栅格转浮点型</span></div>
      <div class="l3"><svg class="i"><use href="#ham"/></svg><span>栅格转点</span></div>
      <div class="l3"><svg class="i"><use href="#ham"/></svg><span>栅格转视频</span></div>
      <div class="l3 cur"><svg class="i"><use href="#ham"/></svg><span>栅格转面</span></div>
      <div class="l2"><svg class="e"><use href="#pl"/></svg><svg class="i"><use href="#tst"/></svg><span>转为 CAD</span></div>
      <div class="l2"><svg class="e"><use href="#pl"/></svg><svg class="i"><use href="#tst"/></svg><span>转为 Collada</span></div>
      <div class="l2"><svg class="e"><use href="#pl"/></svg><svg class="i"><use href="#tst"/></svg><span>转为 Coverage</span></div>
      <div class="l2"><svg class="e"><use href="#pl"/></svg><svg class="i"><use href="#tst"/></svg><span>转为 dBASE</span></div>
      <div class="l2"><svg class="e"><use href="#pl"/></svg><svg class="i"><use href="#tst"/></svg><span>转为 KML</span></div>
      <div class="l2"><svg class="e"><use href="#pl"/></svg><svg class="i"><use href="#tst"/></svg><span>转为 Shapefile</span></div>
      <div class="l2"><svg class="e"><use href="#pl"/></svg><svg class="i"><use href="#tst"/></svg><span>转为栅格</span></div>
      <div class="l2"><svg class="e"><use href="#pl"/></svg><svg class="i"><use href="#tst"/></svg><span>转出至地理数据库</span></div>
      <div><svg class="e"><use href="#pl"/></svg><svg class="i"><use href="#tbx"/></svg><span>宗地结构工具</span></div>
    </div>
    <div class="tabs d-flex align-items-start">
      <div class="tabx"><svg width="16" height="16" viewBox="2 2 18 18"><use href="#win" width="22" height="22"/><svg x="5" y="6" width="14" height="14"><use href="#ham"/></svg></svg>结果</div>
      <div class="tabx act"><svg width="16" height="16" viewBox="2 2 18 18"><use href="#wtbx" width="22" height="22"/></svg>ArcToolbox</div>
    </div>
  </aside>

  <section class="col-toc d-flex flex-column ms-1">
    <div class="ahead d-flex align-items-center"><span class="me-auto">内容列表</span><svg width="10" height="12" class="me-2"><use href="#pinx"/></svg><svg width="10" height="12"><use href="#xx"/></svg></div>
    <div class="toctb d-flex align-items-center"><svg class="ti on"><use href="#lord"/></svg><svg class="ti"><use href="#cyl"/></svg><svg class="ti"><use href="#dia"/></svg><svg class="ti"><use href="#lsel"/></svg><i class="sp"></i><svg class="ti"><use href="#opt"/></svg></div>
    <div class="box flex-fill toc">
      <div class="t0"><svg width="10" height="10"><use href="#mi"/></svg><svg width="17" height="15" class="ms-1 me-1"><use href="#lay"/></svg><b>图层</b></div>
      <div class="t1"><svg width="10" height="10"><use href="#mi"/></svg><svg width="12" height="12" class="chk"><path d="M.75.750h10.500v10.500H.75z" fill="#fff" stroke="#000" stroke-width="1.500"/><path d="M3 5.500l2 3 4-5" fill="none" stroke="#000" stroke-width="1.800"/></svg><span class="sel">njtech.tiff</span></div>
      <div class="t2">RGB</div>
      <div class="t3"><i class="sw sw-r"></i>红色:    Band_1</div>
      <div class="t3"><i class="sw sw-g"></i>绿色: Band_2</div>
      <div class="t3"><i class="sw sw-b"></i>蓝色:   Band_3</div>
    </div>
    <div style="height:1px"></div>
  </section>

  <section class="mapwin d-flex flex-column flex-fill">
    <div class="d-flex flex-fill">
      <div class="canvas flex-fill">
        <svg class="plan" width="978" height="616" viewBox="0 0 978 616">
          <defs>
            <g id="rdA"><path d="M235 33l40 87 25 50 50 90 85 75 80 55 80 85 50 80 40 45 50 85 3 35M645 555l-40 20-40 85-65 180-45 90-45 75-50 85-40 50-100 35-105 70-90 43M738 720l82-60 65-70 186-200M738 720L615 960l-70 125-45 80-310 645-65 75M410 1005l135 80M300 170L480 33M435 335l115-87 170-133 135-82M550 248l175 237M645 555l80-70 155-100 135-105 56-43M70 33l5 57-5 40-45 95M70 130l35-8 75 3 25 8 70-11M1020 33l51 77M25 1115l90 130M210 1185l-5 55-15 35 5 40 18 65M25 980l60-30"/><path d="M550 1245L365 1610l85 38 185-343M550 1245l85 60 85 37 75 53 55 43M795 1395l-275 265M470 1620l50 40 55 55M25 1768l105 37 60 5M0 1710l20 55 50 120M880 1615l-5 25-120 110-55 20M930 1565l135 85M985 1515l86 55M890 1830l90 50M920 1840l-12 45M1071 1590l-22 30 15 15"/></g>
            <g id="rdC"><path d="M190 370v40l30 100 30 10 30-33 112 3M262 370v40l18 77M220 510l-65 60M455 370l-95 195M152 408h36M400 565l60-60M430 510v-15l15-8 40 78M785 370l-5 40-45 20v100l20 15M1020 370l110 175 145-133M1262 370l13 42 88 152M1335 370l102 194M1518 370l32 75 18 10M250 520v45M1290 561l40-40M1040 390l40-20"/></g>
          </defs>
          <rect width="978" height="616" fill="#90706a"/>
          <g transform="translate(621 -11) scale(.33333)">
            <g fill="#30700a">
              <path d="M250 33h75l30 59-45 38-20 2zM310 175L500 33h200l30 65-290 224-60-52-50-60zM790 33h40l-25 19zM720 450l20-17 20 22-25 15z"/>
              <path d="M740 635l40-55 40-60 50-25 35 5 5 15-130 145-20 8-15-13zM705 680l25 20-60 90-80 150-30 70-40 85-10-5 140-270zM980 420l20-35 71-50v15zM1000 500l71-70v15z"/>
              <path d="M40 557l88-49 4 7-82 45zM78 608l52-28 5 10-50 23zM355 825l5-8 40 18-5 8zM400 855l25 12-3 8-22-12z"/>
              <path d="M60 1145l15-15 30 18h45l115-63 110 60-25 55-40 55-62 55-58-10-70-60-60-65zM25 1185l55 45-55 30zM25 1540l125-100-30-120 40-30 25 20 20 160 15 5L50 1735l-35-40zM490 1080l20 8-50 115-25 5z"/>
              <path d="M0 1745h5l20 40v100H0zM75 1795l80 30-60 40zM130 1885l30-25 10 25z"/>
            </g>
            <path d="M612 612l-15 43 8 25-30 20-72 190M780 660l155-172M480 1120L165 1795M468 1120L158 1785M590 930l-60 110" fill="none" stroke="#30700a" stroke-width="1.300"/>
            <path d="M405 160l95-65 80 105-95 65z" fill="#90706a"/>
            <path d="M725 830l160-200 125-130 61-55v677L870 960zM1040 33h31v37z" fill="#cfb178"/>
            <path d="M1071 250L960 325 870 390 760 475 680 550 638 585 615 625 613 660 580 740 515 900 475 960 440 1025 400 1085 365 1180 310 1255 248 1310 232 1350 225 1470 78 1720 80 1745 100 1765 155 1775 165 1760 380 1320 440 1200 490 1090 560 955 640 790 710 660 740 600 790 540 850 490 950 410 1071 320z" fill="#000080"/>
            <path d="M25 1165l215 155" stroke="#000080" fill="none"/>
            <g transform="translate(0 930)">
              <path d="M530 280l300 175 241-170v665H410l120-120-30-30-170-105zM185 950l37-77 78 77z" fill="#cfb178"/>
              <g fill="#30700a"><path d="M825 470l246-248v58L850 482zM340 950l160-142 18 22-118 120zM462 500l43 30-15 25-50-10zM720 550l90-70 20 35-90 55zM565 700l75-90 40-20v35l-90 115zM680 615l55-40 5 15-50 30zM470 765l75-5-35 35zM365 690l70 45-5 5-60-30zM620 950l60-70 110 70zM725 835l145 85 40 30h-90l-70-50zM1000 600l71-70v90zM190 950l30-50 20 15-30 35zM975 610l-30 30 25 10zM850 895l110-110 8 8-105 110z"/></g>
              <path d="M590 690l15 40M610 665l15 40M640 620l15 40M750 530l50 15M770 515l40 15" stroke="#cfb178" fill="none"/>
              <path d="M527 365L380 660" stroke="#30700a" stroke-width="8" stroke-dasharray="9 3" fill="none"/>
              <path d="M600 745l230-210M870 655l201-195M700 880l150 70M1010 950l60-105" stroke="#30700a" stroke-width="2.500" fill="none"/>
              <path d="M930 730l85-75 56 35v150l-81-10z" fill="#90706a"/>
              <path d="M510 652l8 18-15 20-10-2z" fill="#000080"/>
            </g>
            <g fill="#e6e2a0" stroke="#7b4028" stroke-width=".9">
              <path d="M500 95l78-58 19 21 18-20 48 72-23 2 18 28-78 60zM527 130l78-58M552 160l81-58M540 118l25 32M715 65l35-30 20 33-30 24zM700 33h50l-35 32zM623 260l204-153 55-45 136-22 53 70v108l-106 80-202 154zM827 107l138 191M917 475l93-68 10 11-95 70z"/>
              <path d="M1025 540l46 40v60l-51 68-80-53zM900 733l85 42-45 120-93-28zM15 500l105-55 25 50-105 62-25 5zM15 645l35-20 10 7 75-40-5-12 30-18 8 13 14-10 28 48-125 72 5 7-75 36M60 632l25 53M217 693l78-31 7 21-77 28zM260 678l5 18M168 750l42-20 5 15-15 10 12 30-9 3-13-26-13 4zM110 885l105-57 7 10-7-26 70-44h15l20 32 3 35-78 43-15-3-72 45 2 30 60-20 30 15-5 50-20 10-60 33-20-38-60 25 45 65 40 55 108-70 100-190 25-10 35 25-130 217-25-5-105 68-30-8-20 8-80-138 40-25 35-60-25-25zM395 825l20-70 15-5 5-12 15 7 15 15-20 70-15 22-15-7z"/>
              <path d="M663 960l52-67 65 52-2 20-18 30-75 110-30-10-50-35 5-25z"/>
            </g>
            <path d="M110 985l40-15 30 65-35 20zM160 1060l20-10 10 25-25 10zM250 995l50-100 15-5-45 105zM158 925l90-48 5 10-80 50zM211 1018a10 10 0 1 0 20 0 10 10 0 1 0-20 0M300 1080l20-35 5 5-18 35zM310 850l15-3 5 15-12 15z" fill="#30700a"/>
            <g transform="translate(0 930)" fill="#e6e2a0" stroke="#7b4028" stroke-width=".9">
              <path d="M850 78l45 20 45 7-55 135-45-22-40-20zM780 235l82 50-82 115-73-60zM550 350l55 28-80 144-45-25zM520 520l85-135M445 545l62 20-72 140-45-25zM635 395l127 65-212 190-18-50zM305 718l73 32-10 15 12 30-55 70-10-5-25 12-18-22 13-30-37-5 27-60 30 3z"/>
              <path d="M15 390l115-62 15 22-130 75zM57 440l63-45 10 35 10-5 8 30-48 33-25-23 5-20zM15 545l125-60 10 25-105 65-25 25M178 462l12-7 5 8-12 7zM985 615l25 5 5 35 10 10-50 55-20-15 20-30-20-15zM795 790l75-60 40 45-30 30 40 20-45 40-25-15-20 5zM905 890l35-45 30 20 65-5 5 30-20 40-55-8zM1020 720l35 25-30 80-40-15zM1010 825l61 25M895 705l15 5 12 25-20-10zM930 770l15-15 30 35-20 5zM210 930l30-5 40 25h-80zM1035 950l15-30 21 5v25z"/>
            </g>
          </g>
          <g transform="translate(-69 429) scale(.4528 .33333)">
            <g fill="#30700a"><path d="M150 370h310l-70 120-35 75H150zM600 470l80 20 50-50 60-30 20-40h40l-10 60 25 40v95H650zM1030 440l15-15 50 85-30 25 30 30-25-20 0-20zM1065 440l0-40 40-30h20zM1150 540l140-100 50 60 20 61h-260zM1268 370h60l105 191h-48zM1395 460l125-90 25 80v115h-95zM870 561l20-20 5 5-15 20z"/></g>
            <path d="M290 500h55l5 30-80 10zM675 500l45-20v40l110-10v8l-110 10-40 25zM1190 378h75l10 34-55 50-15-20 10-20z" fill="#90706a"/>
            <path d="M440 425l20-45 120-10 75 195H375l50-90 20-15z" fill="#cfb178"/>
            <path d="M450 385l30-15 70 195h-35l-60-165zM510 370h14l66 195h-16z" fill="#30700a"/>
            <g fill="#e6e2a0" stroke="#7b4028" stroke-width=".9"><path d="M272 370h146v17l-20-2-30 5-40-5-30 5-26-5zM150 440l15 0 5 12 12 3-4 32h-28zM262 561l5-40h15l5-13 8 13h25l5-13 12 3 10 20v30zM740 460l25-5 10 7 25-2 5-12 25 5 5-10 20 5v22l-55 10-10 8-50 2zM768 490v40M745 550l15-5 20 5 20-15 25 5 10-10h25v35H745zM1085 425l35-55h75l25 60-80 85-15-5zM930 561l35-50 53-56 40 75-28 25-20-40-55 50zM1005 495l13-10 5 20-13 10zM690 430l40-60h12l-45 65zM605 445l5-5 30 28 28-13 5 10-33 13-28-13zM675 545l40-15 3 10-38 12zM795 370h45l-5 17-40 0zM1155 565l115-118 25 35-15 15 20 30-40 38zM460 550l10-8 15 18zM575 370l15 20 5-5-8-15z"/></g>
          </g>
          <g fill="none" stroke-linejoin="round">
            <g stroke="#7c4504" stroke-width="4.600"><use href="#rdA" transform="translate(621 -11) scale(.33333)"/><use href="#rdC" transform="translate(-69 429) scale(.4528 .33333)"/></g>
            <g stroke="#fff" stroke-width="3"><use href="#rdA" transform="translate(621 -11) scale(.33333)"/><use href="#rdC" transform="translate(-69 429) scale(.4528 .33333)"/></g>
            <path d="M759 618l219-215M815 618l28-30 135-125M813 564l100 54M836 588l58 30" stroke="#90520a" stroke-width="6"/>
            <path d="M759 618l219-215M815 618l28-30 135-125M813 564l100 54M836 588l58 30" stroke="#ff9500" stroke-width="4.400"/>
            <path d="M776 618l202-199M796 618l182-179M151 554l34 64M171 554l33 64" stroke="#000" stroke-width="8"/>
            <path d="M776 618l202-199M796 618l182-179M151 554l34 64M171 554l33 64" stroke="#f00" stroke-width="6.200"/>
          </g>
        </svg>
      </div>
      <div class="vs d-flex flex-column align-items-center pe-1">
        <svg width="16" height="16"><path d="M4 10l4-4 4 4" fill="none" stroke="#555" stroke-width="2"/></svg>
        <div class="thumb flex-fill w-100"></div>
        <svg width="16" height="19"><path d="M4 8l4 4 4-4" fill="none" stroke="#555" stroke-width="2"/></svg>
      </div>
    </div>
    <div class="hs d-flex align-items-start">
      <svg width="92" height="18"><path d="M0 0h15v15H0z" fill="#cce4f7" stroke="#90c8f0"/><path d="M4.500 2.500h7v8h-7z" fill="#9bc46c" stroke="#222"/><path d="M21.500 2.500h6v8h-6zM23 6.500h3" fill="#fff" stroke="#222"/><path d="M36.500 1v14" stroke="#777"/><path d="M46 6q4-6 7-1M54 7q-4 6-7 1" fill="none" stroke="#1c3f80" stroke-width="1.500"/><path d="M54 1v4h-4zM46 12V8h4z" fill="#1c3f80"/><path d="M65 3v6M69 3v6" stroke="#1c3f80" stroke-width="2"/><path d="M86 4l-4 4 4 4" fill="none" stroke="#555" stroke-width="2"/></svg>
      <div class="thumb flex-fill h-100"></div>
      <svg width="41" height="18"><path d="M8 4l4 4-4 4" fill="none" stroke="#555" stroke-width="2"/></svg>
    </div>
    <div style="height:2px" class="bg-white"></div>
  </section>
</main>

<footer class="status d-flex align-items-center ps-1"><span class="me-auto">此地理处理工具用于将栅格数据集转换为面要素。</span><span class="coord">13206046.454&nbsp; 3773556.366 米</span></footer>

<div class="dlg">
  <div class="dlgt d-flex align-items-center">
    <svg width="23" height="22" class="me-1"><use href="#ham"/></svg><span class="me-auto">栅格转面</span>
    <svg width="133" height="14"><path d="M2 5.500h12M59.500 .5h11v11h-11zM119 0l12 12M131 0l-12 12" fill="none" stroke="#000"/></svg>
  </div>
  <div class="frame d-flex">
    <div class="form">
      <div class="lb">输入栅格</div>
      <div class="brow d-flex align-items-center">
        <div class="fi one mono"><span class="me-auto">njtech.tiff</span><span class="dd d-flex align-items-center justify-content-center"><svg width="10" height="6"><path d="M0 0h10L5 5z"/></svg></span></div>
        <span class="bb ms-auto"><svg width="20" height="20"><use href="#open"/></svg></span>
      </div>
      <div class="lb lb2">字段 <i>(</i>可选<i>)</i></div>
      <div class="fi two mono"><span class="me-auto">Value</span><svg width="10" height="6"><use href="#chev"/></svg></div>
      <div class="lb lb3">输出面要素</div>
      <div class="brow d-flex align-items-center">
        <div class="fi three mono">C:\Users\Administrator\Desktop\gis_data\njtech_building.shp</div>
        <span class="bb foc ms-auto"><svg width="20" height="20"><use href="#open"/></svg></span>
      </div>
      <div class="lb lb4 d-flex align-items-center"><svg width="16" height="16"><path d="M.5.500h15v15H.5z" fill="#fff" stroke="#333"/><path d="M3.500 8l3 3.500 6-7" fill="none" stroke="#222" stroke-width="1.300"/></svg><span>简化面 <i>(</i>可选<i>)</i></span></div>
      <svg width="640" height="20" class="hscr"><path d="M15 0h591v19H15z" fill="#cdcdcd"/><path d="M7 3L1 9.500 7 16M614 3l6 6.500-6 6.500" fill="none" stroke="#606060" stroke-width="3.500"/></svg>
    </div>
    <svg width="22" height="470" class="ms-auto"><path d="M0 0h22v470H0z" fill="#f9f9f9"/><path d="M3 25l7-7 7 7M3 443l7 7 7-7" fill="none" stroke="#c0c0c0" stroke-width="3.500"/></svg>
  </div>
  <div class="dbtns d-flex justify-content-end">
    <button class="btn dbtn b1">确定</button><button class="btn dbtn b1">取消</button><button class="btn dbtn b2">环境...</button><button class="btn dbtn b3">显示帮助 &gt;&gt;</button>
  </div>
</div>
</body>
</html>
